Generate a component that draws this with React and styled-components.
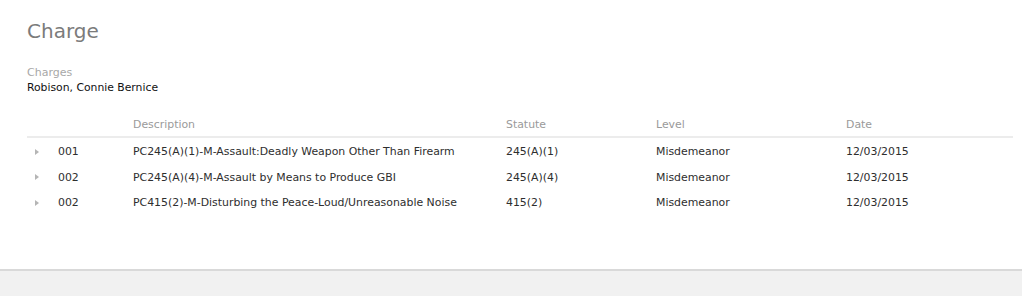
import React from "react";
import styled, { createGlobalStyle } from "styled-components";

const GlobalStyle = createGlobalStyle`
  html, body {
    margin: 0;
    padding: 0;
    background: #f1f1f1;
    font-family: "DejaVu Sans", Tahoma, Verdana, sans-serif;
  }
`;

const Panel = styled.section`
  background: #fff;
  height: 271px;
  box-sizing: border-box;
  padding: 17px 9px 0 27px;
  border-bottom: 2px solid #d9d9d9;
  box-shadow: 0 2px 3px rgba(0, 0, 0, 0.06);
`;

const Title = styled.h1`
  margin: 0;
  font-size: 20px;
  font-weight: normal;
  line-height: 28px;
  color: #7b7b7b;
`;

const FieldLabel = styled.div`
  margin-top: 21px;
  font-size: 11px;
  line-height: 14px;
  color: #a8a8a8;
`;

const FieldValue = styled.div`
  font-size: 10.8px;
  line-height: 15px;
  color: #111;
`;

const Table = styled.div`
  margin-top: 17px;
  font-size: 10.9px;
`;

const Row = styled.div`
  display: grid;
  grid-template-columns: 31px 75px 373px 150px 190px 1fr;
  align-items: center;
  height: ${(p) => (p.$head ? "24px" : "25.5px")};
  color: ${(p) => (p.$head ? "#9a9a9a" : "#2e2e2e")};
  border-bottom: ${(p) => (p.$head ? "2px solid #ececec" : "none")};
  margin-bottom: ${(p) => (p.$head ? "1px" : "0")};
`;

const Cell = styled.div`
  white-space: nowrap;
`;

const Toggle = styled.span`
  display: block;
  width: 0;
  height: 0;
  margin-left: 8px;
  border-top: 3px solid transparent;
  border-bottom: 3px solid transparent;
  border-left: 4px solid #b5b5b5;
`;

const charges = [
  {
    id: "001",
    description: "PC245(A)(1)-M-Assault:Deadly Weapon Other Than Firearm",
    statute: "245(A)(1)",
    level: "Misdemeanor",
    date: "12/03/2015",
  },
  {
    id: "002",
    description: "PC245(A)(4)-M-Assault by Means to Produce GBI",
    statute: "245(A)(4)",
    level: "Misdemeanor",
    date: "12/03/2015",
  },
  {
    id: "002",
    description: "PC415(2)-M-Disturbing the Peace-Loud/Unreasonable Noise",
    statute: "415(2)",
    level: "Misdemeanor",
    date: "12/03/2015",
  },
];

export default function App() {
  return (
    <>
      <GlobalStyle />
      <Panel>
        <Title>Charge</Title>
        <FieldLabel>Charges</FieldLabel>
        <FieldValue>Robison, Connie Bernice</FieldValue>
        <Table>
          <Row $head>
            <Cell />
            <Cell />
            <Cell>Description</Cell>
            <Cell>Statute</Cell>
            <Cell>Level</Cell>
            <Cell>Date</Cell>
          </Row>
          {charges.map((c, i) => (
            <Row key={i}>
              <Cell>
                <Toggle />
              </Cell>
              <Cell>{c.id}</Cell>
              <Cell>{c.description}</Cell>
              <Cell>{c.statute}</Cell>
              <Cell>{c.level}</Cell>
              <Cell>{c.date}</Cell>
            </Row>
          ))}
        </Table>
      </Panel>
    </>
  );
}
